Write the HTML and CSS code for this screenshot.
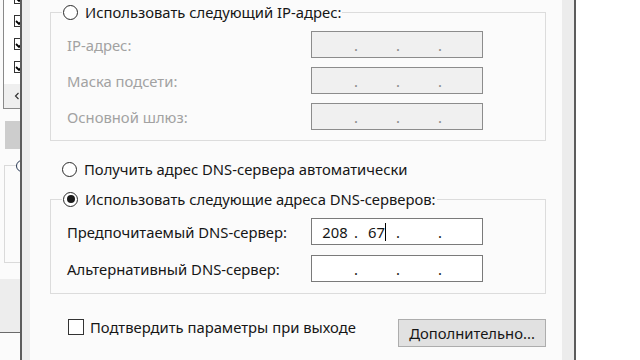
FILE: index.html
```html
<!DOCTYPE html>
<html lang="ru">
<head>
<meta charset="utf-8">
<title>Свойства IPv4</title>
<link rel="stylesheet" href="styles.css">
</head>
<body>
<div class="screen">
  <div class="behind">
    <div class="list">
      <div class="item"><span class="cb"><svg viewBox="0 0 12 12" width="12" height="12"><path d="M2 6 L5 9 L10 3" fill="none" stroke="#000" stroke-width="1.8"/></svg></span></div>
      <div class="item"><span class="cb"><svg viewBox="0 0 12 12" width="12" height="12"><path d="M2 6 L5 9 L10 3" fill="none" stroke="#000" stroke-width="1.8"/></svg></span></div>
      <div class="item"><span class="cb"><svg viewBox="0 0 12 12" width="12" height="12"><path d="M2 6 L5 9 L10 3" fill="none" stroke="#000" stroke-width="1.8"/></svg></span></div>
      <div class="item"><span class="cb"><svg viewBox="0 0 12 12" width="12" height="12"><path d="M2 6 L5 9 L10 3" fill="none" stroke="#000" stroke-width="1.8"/></svg></span></div>
      <div class="hscroll"><svg viewBox="0 0 8 10" width="8" height="10"><path d="M6 1 L2 5 L6 9" fill="none" stroke="#333" stroke-width="1.6"/></svg></div>
    </div>
    <div class="bgbtn"></div>
    <div class="bggroup"><span class="bgradio"></span></div>
    <div class="bgpanel"></div>
  </div>
  <div class="edge"></div>
  <div class="frame"></div>

  <div class="page">
    <fieldset class="group">
      <legend class="radio-row"><span class="radio"></span><span>Использовать следующий IP-адрес:</span></legend>
      <div class="field-row">
        <span class="label disabled">IP-адрес:</span>
        <div class="ip disabled-box"><span class="oct"></span><span class="dot">.</span><span class="oct"></span><span class="dot">.</span><span class="oct"></span><span class="dot">.</span><span class="oct"></span></div>
      </div>
      <div class="field-row">
        <span class="label disabled">Маска подсети:</span>
        <div class="ip disabled-box"><span class="oct"></span><span class="dot">.</span><span class="oct"></span><span class="dot">.</span><span class="oct"></span><span class="dot">.</span><span class="oct"></span></div>
      </div>
      <div class="field-row">
        <span class="label disabled">Основной шлюз:</span>
        <div class="ip disabled-box"><span class="oct"></span><span class="dot">.</span><span class="oct"></span><span class="dot">.</span><span class="oct"></span><span class="dot">.</span><span class="oct"></span></div>
      </div>
    </fieldset>

    <div class="radio-row standalone"><span class="radio"></span><span>Получить адрес DNS-сервера автоматически</span></div>

    <fieldset class="group dns">
      <legend class="radio-row"><span class="radio checked"></span><span>Использовать следующие адреса DNS-серверов:</span></legend>
      <div class="field-row">
        <span class="label">Предпочитаемый DNS-сервер:</span>
        <div class="ip"><span class="oct">208</span><span class="dot">.</span><span class="oct">67<span class="caret"></span></span><span class="dot">.</span><span class="oct"></span><span class="dot">.</span><span class="oct"></span></div>
      </div>
      <div class="field-row">
        <span class="label">Альтернативный DNS-сервер:</span>
        <div class="ip"><span class="oct"></span><span class="dot">.</span><span class="oct"></span><span class="dot">.</span><span class="oct"></span><span class="dot">.</span><span class="oct"></span></div>
      </div>
    </fieldset>

    <div class="bottom-row">
      <label class="check-row"><span class="checkbox"></span><span>Подтвердить параметры при выходе</span></label>
      <button class="btn" type="button">Дополнительно...</button>
    </div>
  </div>

  <div class="frame right"></div>
  <div class="edge"></div>
  <div class="desktop"></div>
</div>
</body>
</html>
```

FILE: styles.css
```css
* { box-sizing: border-box; }
html, body { margin: 0; padding: 0; }
body {
  width: 640px;
  height: 360px;
  overflow: hidden;
  background: #ffffff;
  font-family: "Noto Sans", "Open Sans", sans-serif;
  font-size: 14.8px;
  color: #161616;
}
.screen {
  display: flex;
  height: 360px;
}

/* window behind */
.behind {
  width: 20px;
  flex: none;
  display: flex;
  flex-direction: column;
  background: #fbfbfb;
  overflow: hidden;
}
.list {
  margin: -14px 0 0 3px;
  height: 123px;
  flex: none;
  border-left: 1px solid #8a8a8a;
  border-bottom: 1px solid #8a8a8a;
  background: #fff;
  display: flex;
  flex-direction: column;
}
.item {
  height: 23px;
  flex: none;
  padding-left: 10px;
  display: flex;
  align-items: center;
}
.cb {
  width: 12px;
  height: 12px;
  border: 1px solid #333;
  display: block;
  flex: none;
  background: #fff;
}
.cb svg { display: block; margin: -1px; }
.hscroll {
  margin-top: auto;
  height: 24px;
  background: #efefef;
  display: flex;
  align-items: center;
  padding-left: 10px;
}
.bgbtn {
  margin: 12px 0 0 5px;
  height: 28px;
  flex: none;
  background: #cdcdcd;
}
.bggroup {
  margin: 16px 0 0 4px;
  height: 98px;
  flex: none;
  border: 1px solid #dadada;
  border-right: 0;
  position: relative;
}
.bgradio {
  position: absolute;
  left: 11px;
  top: -6px;
  width: 12px;
  height: 12px;
  border: 1.5px solid #2a3a55;
  border-radius: 50%;
  background: #fbfbfb;
}
.bgpanel {
  margin-top: 16px;
  height: 54px;
  flex: none;
  background: #ededed;
  border-bottom: 1.5px solid #6a6a6a;
}

.edge {
  width: 2px;
  flex: none;
  background: #5c5c5c;
}
.frame {
  width: 8px;
  flex: none;
  background: #ececec;
}
.frame.right { width: 12px; }
.desktop {
  flex: 1;
  background: #ffffff;
}

/* dialog page */
.page {
  width: 532px;
  flex: none;
  background: #fbfbfb;
  padding: 2px 16px 0 20px;
  display: flex;
  flex-direction: column;
}
.group {
  margin: 0;
  border: 1px solid #dcdcdc;
  padding: 9px 10px 10px 16px;
  display: flex;
  flex-direction: column;
  gap: 9px;
  min-width: 0;
}
.group legend {
  margin-left: -5px;
  padding: 0 1px;
}
.radio-row {
  display: flex;
  align-items: center;
  gap: 7px;
  height: 20px;
  line-height: 20px;
  white-space: nowrap;
}
.radio {
  width: 15px;
  height: 15px;
  border: 1.3px solid #2a2a2a;
  border-radius: 50%;
  background: #fff;
  flex: none;
  display: flex;
  align-items: center;
  justify-content: center;
}
.radio.checked::after {
  content: "";
  width: 8px;
  height: 8px;
  border-radius: 50%;
  background: #1a1a1a;
}
.standalone {
  margin: 18px 0 10px 12px;
}
.field-row {
  display: flex;
  align-items: center;
  height: 27px;
}
.label {
  width: 244px;
  flex: none;
  white-space: nowrap;
}
.label.disabled { color: #a2a2a2; }
.ip {
  width: 172px;
  height: 27px;
  border: 1.5px solid #7a7a7a;
  background: #fff;
  display: flex;
  align-items: center;
  padding-left: 5px;
  line-height: 20px;
}
.ip.disabled-box {
  background: #f0f0f0;
  border-color: #8c8c8c;
  color: #8a8a8a;
}
.oct {
  width: 36px;
  flex: none;
  text-align: center;
  display: flex;
  justify-content: center;
  align-items: center;
}
.dot {
  width: 6px;
  flex: none;
  text-align: center;
}
.caret {
  display: inline-block;
  width: 1px;
  height: 18px;
  background: #000;
}
.dns {
  gap: 10px;
  padding-bottom: 11px;
}
.bottom-row {
  margin-top: 24px;
  display: flex;
  align-items: flex-start;
  justify-content: space-between;
  padding-left: 18px;
}
.check-row {
  display: flex;
  align-items: center;
  gap: 6px;
  height: 17px;
  white-space: nowrap;
}
.checkbox {
  width: 16px;
  height: 16px;
  border: 1.5px solid #333;
  background: #fff;
  flex: none;
}
.btn {
  margin-top: 1px;
  width: 148px;
  height: 28px;
  background: #e1e1e1;
  border: 1.5px solid #adadad;
  font-family: inherit;
  font-size: 14.8px;
  color: #161616;
  padding: 0;
}
```
